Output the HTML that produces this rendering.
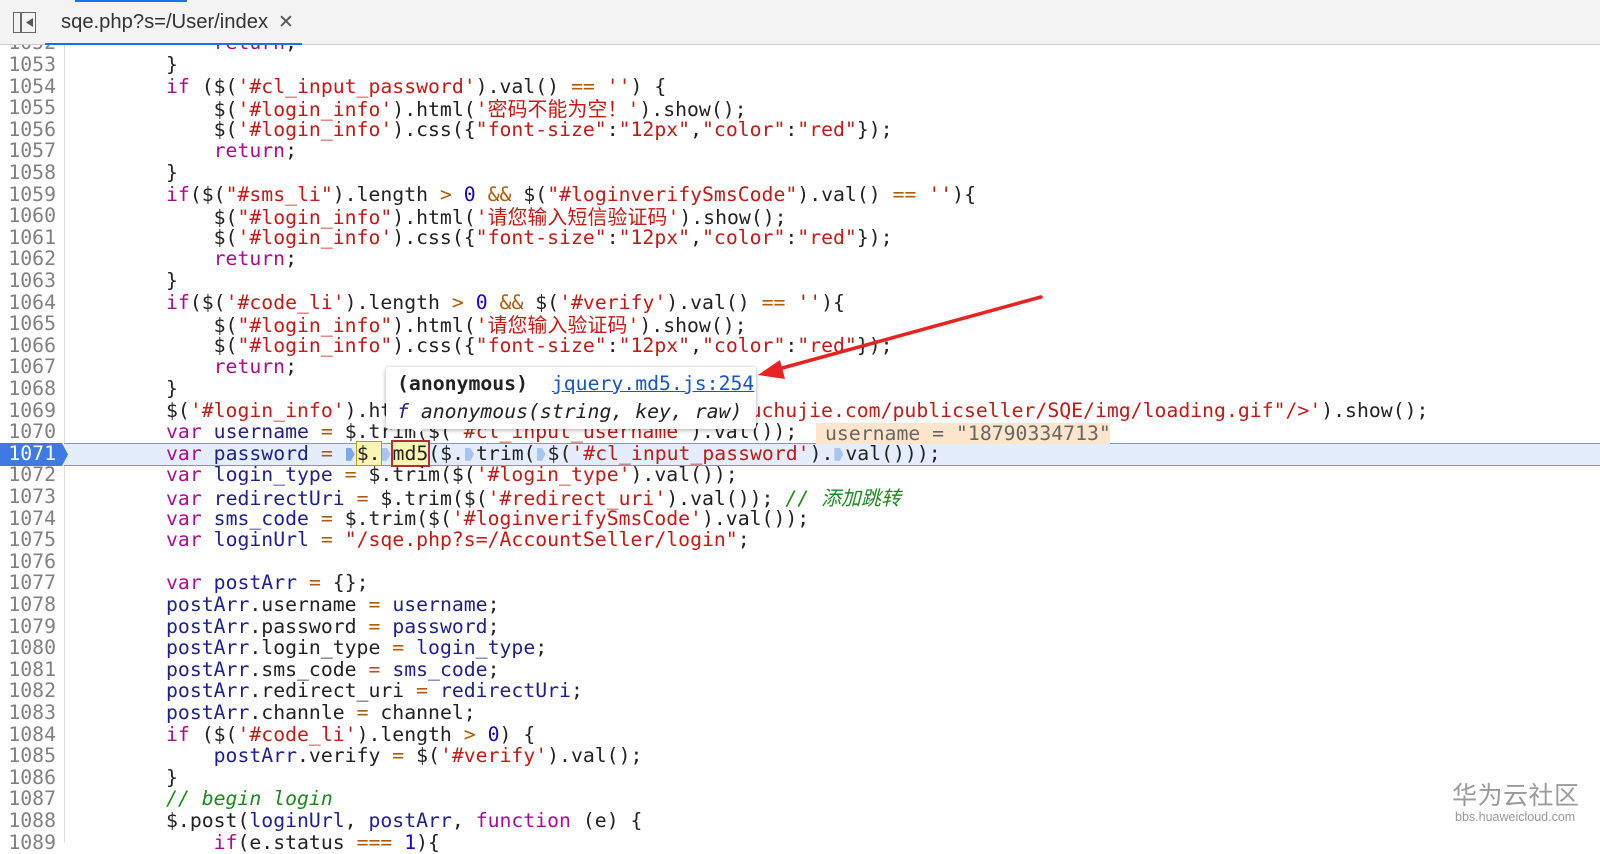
<!DOCTYPE html>
<html><head><meta charset="utf-8">
<style>
html,body{margin:0;padding:0;width:1600px;height:843px;overflow:hidden;background:#fff;}
.code{position:absolute;left:0;top:0;width:1600px;height:843px;font-family:"DejaVu Sans Mono","Liberation Mono","Noto Sans CJK SC",monospace;font-size:19.8px;color:#222;}
.r{position:absolute;left:0;width:1600px;height:21.6px;line-height:21.6px;white-space:pre;}
.n{position:absolute;left:0;width:56px;text-align:right;color:#808080;}
.t{position:absolute;left:166px;}
.k{color:#aa0d91}.s{color:#c41a16}.o{color:#b05a0a}.m{color:#1c00cf}.v{color:#1f1f8f}.c{color:#1e8a1e;font-style:italic}
.cj{font-family:"Noto Sans CJK SC",sans-serif;letter-spacing:0.2px;}
.gut{position:absolute;left:64px;top:45px;width:1px;height:798px;background:#ddd;}
.bar{position:absolute;left:0;top:0;width:1600px;height:45px;background:#f3f3f3;border-bottom:1px solid #cfcfcf;box-sizing:border-box;}
.bp{display:inline-block;width:9px;height:13px;background:#7da6ee;clip-path:polygon(0 0,60% 0,100% 50%,60% 100%,0 100%);vertical-align:-1px;margin:0 2px 0 1px;}
.bp.l{background:#a9c4f2}
</style></head><body>
<div class="code">
<div class="gut"></div>
<div style="position:absolute;left:64px;top:443px;width:1536px;height:21px;background:#e4edfb;border-top:1px solid #6f9be6;border-bottom:1px solid #6f9be6;"></div>
<div style="position:absolute;left:0;top:443px;width:68px;height:23px;background:#3d7ae3;clip-path:polygon(0 0,62px 0,68px 50%,62px 100%,0 100%);"></div>

<div class="r" style="top:32.4px"><span class="n">1052</span><span class="t">    <span class="k">return</span>;</span></div>
<div class="r" style="top:54px"><span class="n">1053</span><span class="t">}</span></div>
<div class="r" style="top:75.6px"><span class="n">1054</span><span class="t"><span class="k">if</span> ($(<span class="s">'#cl_input_password'</span>).val() <span class="o">==</span> <span class="s">''</span>) {</span></div>
<div class="r" style="top:97.2px"><span class="n">1055</span><span class="t">    $(<span class="s">'#login_info'</span>).html(<span class="s">'<span class="cj">密码不能为空！</span>'</span>).show();</span></div>
<div class="r" style="top:118.8px"><span class="n">1056</span><span class="t">    $(<span class="s">'#login_info'</span>).css({<span class="s">"font-size"</span>:<span class="s">"12px"</span>,<span class="s">"color"</span>:<span class="s">"red"</span>});</span></div>
<div class="r" style="top:140.4px"><span class="n">1057</span><span class="t">    <span class="k">return</span>;</span></div>
<div class="r" style="top:162px"><span class="n">1058</span><span class="t">}</span></div>
<div class="r" style="top:183.6px"><span class="n">1059</span><span class="t"><span class="k">if</span>($(<span class="s">"#sms_li"</span>).length <span class="o">&gt;</span> <span class="m">0</span> <span class="o">&amp;&amp;</span> $(<span class="s">"#loginverifySmsCode"</span>).val() <span class="o">==</span> <span class="s">''</span>){</span></div>
<div class="r" style="top:205.2px"><span class="n">1060</span><span class="t">    $(<span class="s">"#login_info"</span>).html(<span class="s">'<span class="cj">请您输入短信验证码</span>'</span>).show();</span></div>
<div class="r" style="top:226.8px"><span class="n">1061</span><span class="t">    $(<span class="s">'#login_info'</span>).css({<span class="s">"font-size"</span>:<span class="s">"12px"</span>,<span class="s">"color"</span>:<span class="s">"red"</span>});</span></div>
<div class="r" style="top:248.4px"><span class="n">1062</span><span class="t">    <span class="k">return</span>;</span></div>
<div class="r" style="top:270px"><span class="n">1063</span><span class="t">}</span></div>
<div class="r" style="top:291.6px"><span class="n">1064</span><span class="t"><span class="k">if</span>($(<span class="s">'#code_li'</span>).length <span class="o">&gt;</span> <span class="m">0</span> <span class="o">&amp;&amp;</span> $(<span class="s">'#verify'</span>).val() <span class="o">==</span> <span class="s">''</span>){</span></div>
<div class="r" style="top:313.2px"><span class="n">1065</span><span class="t">    $(<span class="s">"#login_info"</span>).html(<span class="s">'<span class="cj">请您输入验证码</span>'</span>).show();</span></div>
<div class="r" style="top:334.8px"><span class="n">1066</span><span class="t">    $(<span class="s">"#login_info"</span>).css({<span class="s">"font-size"</span>:<span class="s">"12px"</span>,<span class="s">"color"</span>:<span class="s">"red"</span>});</span></div>
<div class="r" style="top:356.4px"><span class="n">1067</span><span class="t">    <span class="k">return</span>;</span></div>
<div class="r" style="top:378px"><span class="n">1068</span><span class="t">}</span></div>
<div class="r" style="top:399.6px"><span class="n">1069</span><span class="t">$(<span class="s">'#login_info'</span>).html(<span class="s">'&lt;img src="http://static.youchujie.com/publicseller/SQE/img/loading.gif"/&gt;'</span>).show();</span></div>
<div class="r" style="top:421.2px"><span class="n">1070</span><span class="t"><span class="k">var</span> <span class="v">username</span> <span class="o">=</span> $.trim($(<span class="s">'#cl_input_username'</span>).val());</span></div>
<div style="position:absolute;left:816px;top:423px;width:294px;height:21px;background:#fce5cc;font-family:'DejaVu Sans Mono',monospace;font-size:19.8px;line-height:21px;color:#666;white-space:pre;box-sizing:border-box;padding-left:9px;">username = "18790334713"</div>
<div class="r" style="top:442.8px"><span class="n" style="color:#fff">1071</span><span class="t"><span class="k">var</span> <span class="v">password</span> <span class="o">=</span> <span class="bp"></span><span style="background:#fbf5b4;outline:1px solid #b0a020">$.</span><span class="bp l"></span><span style="background:#fbf5b4;outline:2px solid #b23030">md5</span>($.<span class="bp l"></span>trim(<span class="bp l"></span>$(<span class="s">'#cl_input_password'</span>).<span class="bp l"></span>val()));</span></div>
<div class="r" style="top:464.4px"><span class="n">1072</span><span class="t"><span class="k">var</span> <span class="v">login_type</span> <span class="o">=</span> $.trim($(<span class="s">'#login_type'</span>).val());</span></div>
<div class="r" style="top:486px"><span class="n">1073</span><span class="t"><span class="k">var</span> <span class="v">redirectUri</span> <span class="o">=</span> $.trim($(<span class="s">'#redirect_uri'</span>).val()); <span class="c">// <span class="cj">添加跳转</span></span></span></div>
<div class="r" style="top:507.6px"><span class="n">1074</span><span class="t"><span class="k">var</span> <span class="v">sms_code</span> <span class="o">=</span> $.trim($(<span class="s">'#loginverifySmsCode'</span>).val());</span></div>
<div class="r" style="top:529.2px"><span class="n">1075</span><span class="t"><span class="k">var</span> <span class="v">loginUrl</span> <span class="o">=</span> <span class="s">"/sqe.php?s=/AccountSeller/login"</span>;</span></div>
<div class="r" style="top:550.8px"><span class="n">1076</span></div>
<div class="r" style="top:572.4px"><span class="n">1077</span><span class="t"><span class="k">var</span> <span class="v">postArr</span> <span class="o">=</span> {};</span></div>
<div class="r" style="top:594px"><span class="n">1078</span><span class="t"><span class="v">postArr</span>.username <span class="o">=</span> <span class="v">username</span>;</span></div>
<div class="r" style="top:615.6px"><span class="n">1079</span><span class="t"><span class="v">postArr</span>.password <span class="o">=</span> <span class="v">password</span>;</span></div>
<div class="r" style="top:637.2px"><span class="n">1080</span><span class="t"><span class="v">postArr</span>.login_type <span class="o">=</span> <span class="v">login_type</span>;</span></div>
<div class="r" style="top:658.8px"><span class="n">1081</span><span class="t"><span class="v">postArr</span>.sms_code <span class="o">=</span> <span class="v">sms_code</span>;</span></div>
<div class="r" style="top:680.4px"><span class="n">1082</span><span class="t"><span class="v">postArr</span>.redirect_uri <span class="o">=</span> <span class="v">redirectUri</span>;</span></div>
<div class="r" style="top:702px"><span class="n">1083</span><span class="t"><span class="v">postArr</span>.channle <span class="o">=</span> channel;</span></div>
<div class="r" style="top:723.6px"><span class="n">1084</span><span class="t"><span class="k">if</span> ($(<span class="s">'#code_li'</span>).length <span class="o">&gt;</span> <span class="m">0</span>) {</span></div>
<div class="r" style="top:745.2px"><span class="n">1085</span><span class="t">    <span class="v">postArr</span>.verify <span class="o">=</span> $(<span class="s">'#verify'</span>).val();</span></div>
<div class="r" style="top:766.8px"><span class="n">1086</span><span class="t">}</span></div>
<div class="r" style="top:788.4px"><span class="n">1087</span><span class="t"><span class="c">// begin login</span></span></div>
<div class="r" style="top:810px"><span class="n">1088</span><span class="t">$.post(<span class="v">loginUrl</span>, <span class="v">postArr</span>, <span class="k">function</span> (e) {</span></div>
<div class="r" style="top:831.6px"><span class="n">1089</span><span class="t">    <span class="k">if</span>(e.status <span class="o">===</span> <span class="m">1</span>){</span></div>

<div style="position:absolute;left:386px;top:367px;width:370px;height:62px;background:#fff;border-radius:3px;box-shadow:0 1px 5px rgba(0,0,0,0.35);"></div>
<div style="position:absolute;left:411px;top:427px;width:14px;height:8px;background:#fff;clip-path:polygon(0 0,100% 0,50% 100%);"></div>
<div style="position:absolute;left:397px;top:373px;font-size:19.8px;line-height:22px;white-space:pre;"><b>(anonymous)</b>  <span style="color:#1a55c8;text-decoration:underline;">jquery.md5.js:254</span></div>
<div style="position:absolute;left:397px;top:401px;font-size:19.8px;line-height:22px;white-space:pre;font-style:italic;"><span style="color:#1f1f8f">f</span> anonymous(string, key, raw)</div>
</div>

<svg style="position:absolute;left:0;top:0" width="1600" height="843">
<line x1="1041" y1="297" x2="775" y2="370" stroke="#e8231f" stroke-width="3.5" stroke-linecap="round"/>
<polygon points="758,375 780,360 785,379" fill="#e8231f"/>
</svg>

<div class="bar"></div>
<div style="position:absolute;left:75px;top:0;width:112px;height:2px;background:#1a73e8"></div>
<div style="position:absolute;left:45px;top:43px;width:257px;height:2px;background:#1a73e8"></div>
<div style="position:absolute;left:13px;top:12px;width:23px;height:21px;border:1.5px solid #666;box-sizing:border-box;"></div>
<div style="position:absolute;left:20px;top:12px;width:1.5px;height:21px;background:#666"></div>
<div style="position:absolute;left:26px;top:18px;width:7px;height:9px;background:#555;clip-path:polygon(100% 0,0 50%,100% 100%);"></div>
<div style="position:absolute;left:61px;top:10px;font-family:'Liberation Sans',sans-serif;font-size:20.2px;color:#333;line-height:24px;">sqe.php?s=/User/index</div>
<div style="position:absolute;left:278px;top:10px;font-family:'DejaVu Sans',sans-serif;font-size:19px;color:#555;line-height:24px;">✕</div>

<div style="position:absolute;left:1452px;top:779px;font-family:'Noto Sans CJK SC',sans-serif;font-size:25px;line-height:30px;color:#9a9a9a;letter-spacing:0.5px;">华为云社区</div>
<div style="position:absolute;left:1455px;top:810px;font-family:'Liberation Sans',sans-serif;font-size:12.5px;line-height:15px;color:#999;">bbs.huaweicloud.com</div>
</body></html>
